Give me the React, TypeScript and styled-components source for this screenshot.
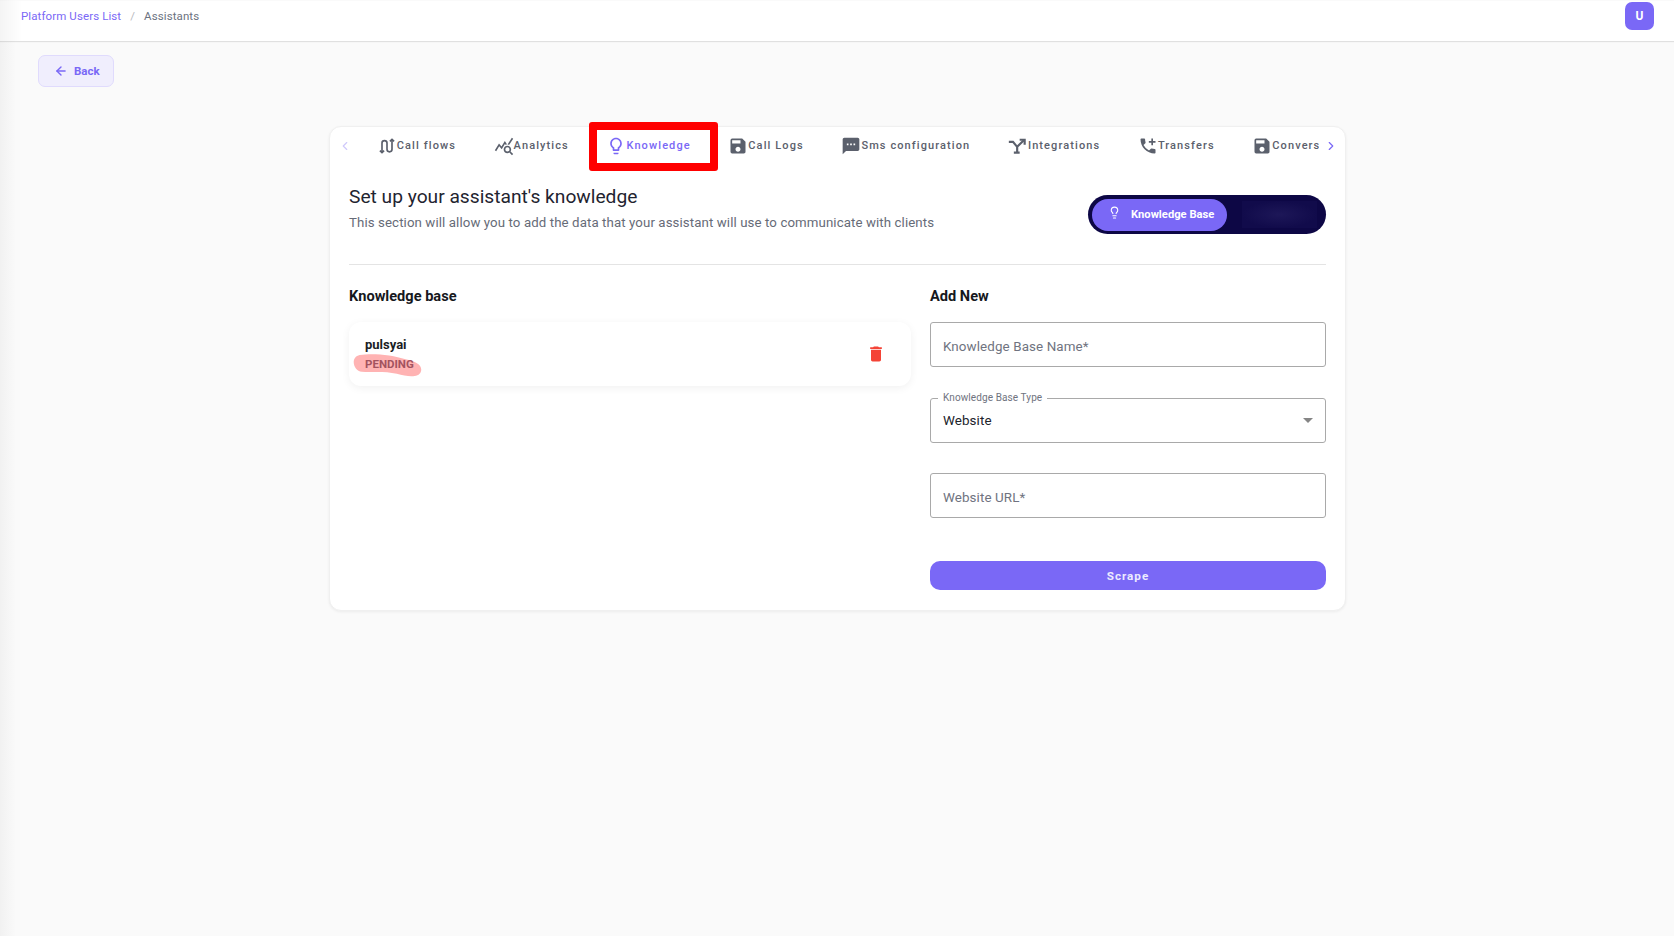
import React from 'react';
import styled, { createGlobalStyle } from 'styled-components';
import { ArrowLeft, ChevronLeft, ChevronRight, Lightbulb } from 'lucide-react';
import {
	MdAddIcCall,
	MdDelete,
	MdLightbulbOutline,
	MdOutlineQueryStats,
	MdSave,
	MdSms,
} from 'react-icons/md';

const GlobalStyle = createGlobalStyle`
	html, body {
		margin: 0;
		padding: 0;
		background: #fafafa;
		font-family: Roboto, "Liberation Sans", sans-serif;
	}
	* {
		box-sizing: border-box;
	}
`;

const Page = styled.div`
	position: relative;
	width: 1674px;
	height: 936px;
	overflow: hidden;
	background: linear-gradient(90deg, #f1f1f1 0, #fafafa 16px);
`;

const TopBar = styled.header`
	display: flex;
	align-items: flex-start;
	justify-content: space-between;
	height: 40px;
	margin-top: 1px;
	padding: 1px 20px 0 21px;
	background: linear-gradient(90deg, #f4f4f4 0, #ffffff 22px);
	box-shadow: 0 1px 1px rgba(0, 0, 0, 0.1);
`;

const Crumbs = styled.nav`
	display: flex;
	align-items: center;
	gap: 9px;
	height: 28px;
	font-size: 11.5px;
	letter-spacing: 0.1px;
`;

const CrumbLink = styled.span`
	color: #7a68f6;
`;

const CrumbSep = styled.span`
	color: #b9b9c0;
`;

const CrumbCurrent = styled.span`
	color: #6b7280;
`;

const Avatar = styled.div`
	display: flex;
	align-items: center;
	justify-content: center;
	width: 29px;
	height: 28px;
	border-radius: 7px;
	background: #7a68f6;
	color: #fff;
	font-size: 12px;
	font-weight: 700;
`;

const BackRow = styled.div`
	padding: 14px 0 0 38px;
`;

const BackButton = styled.button`
	display: flex;
	align-items: center;
	gap: 6px;
	width: 76px;
	height: 32px;
	padding: 0 0 0 15px;
	border: 1px solid #e0dbfd;
	border-radius: 7px;
	background: #f0eefd;
	color: #7a68f6;
	font-family: inherit;
	font-size: 11.5px;
	font-weight: 700;
`;

const Card = styled.main`
	width: 1017px;
	height: 485px;
	margin: 39px 0 0 329px;
	padding: 0 19px;
	border: 1px solid #f0f0f0;
	border-radius: 12px;
	background: #fff;
	box-shadow: 0 1px 3px rgba(0, 0, 0, 0.06);
`;

const TabBar = styled.div`
	display: flex;
	align-items: center;
	height: 37px;
	margin: 0 -19px;
	padding: 0 7px 0 8px;
`;

const ScrollArrow = styled.span<{ $dim?: boolean }>`
	display: flex;
	flex: none;
	width: 14px;
	color: ${({ $dim }) => ($dim ? '#cfc9fb' : '#7a68f6')};
`;

const TabScroller = styled.div`
	display: flex;
	flex: 1;
	align-items: center;
	min-width: 0;
	overflow: hidden;
	margin: 0 5px 0 6px;
`;

const Tab = styled.div<{ $active?: boolean }>`
	display: flex;
	flex: none;
	align-items: center;
	padding: 0 18.8px;
	color: ${({ $active }) => ($active ? '#7a68f6' : '#5b606c')};
	font-size: 11px;
	font-weight: 500;
	letter-spacing: 1.1px;
	white-space: nowrap;

	svg {
		flex: none;
		width: 20px;
		height: 20px;
	}
`;

const Highlight = styled.div`
	position: absolute;
	left: 589px;
	top: 122px;
	width: 129px;
	height: 49px;
	border: 8px solid #ff0000;
	border-radius: 3px;
	pointer-events: none;
`;

const Heading = styled.div`
	display: flex;
	align-items: flex-start;
	justify-content: space-between;
	height: 101px;
	padding-top: 21px;
	border-bottom: 1px solid #e4e4e4;
`;

const Title = styled.h1`
	margin: 0 0 5px;
	color: #1f2430;
	font-size: 19.2px;
	font-weight: 400;
	line-height: 24px;
`;

const Subtitle = styled.p`
	margin: 0;
	color: #666b77;
	font-size: 13.25px;
	line-height: 18px;
	letter-spacing: 0.1px;
`;

const ModeSwitch = styled.div`
	display: flex;
	align-items: center;
	gap: 15px;
	width: 238px;
	height: 39px;
	margin-top: 10px;
	padding: 3px 0 3px 4px;
	border-radius: 20px;
	background: #0d0745;
`;

const ModeActive = styled.div`
	display: flex;
	flex: none;
	align-items: center;
	gap: 10px;
	width: 135px;
	height: 32px;
	padding: 0 0 1px 16px;
	border-radius: 16px;
	background: #7a68f6;
	color: #fff;
	font-size: 11.2px;
	font-weight: 700;
	white-space: nowrap;
`;

const ModeIcon = styled(Lightbulb)`
	margin-top: -3px;
`;

const ModeHidden = styled.div`
	width: 75px;
	height: 27px;
	background: radial-gradient(ellipse at center, #1d1758 0, #110b4b 70%);
`;

const Columns = styled.div`
	display: grid;
	grid-template-columns: 562px 396px;
	gap: 19px;
`;

const SectionTitle = styled.h2`
	margin: 0;
	padding: 22px 0 17px;
	color: #16181d;
	font-size: 14.6px;
	font-weight: 700;
	line-height: 18px;
`;

const KnowledgeItem = styled.div`
	display: flex;
	align-items: center;
	justify-content: space-between;
	height: 64px;
	padding: 0 25px 0 16px;
	border-radius: 12px;
	background: #fff;
	box-shadow: 0 2px 8px rgba(0, 0, 0, 0.06);
`;

const ItemName = styled.div`
	color: #1a1d24;
	font-size: 13px;
	font-weight: 700;
	line-height: 16px;
`;

const StatusWrap = styled.div`
	position: relative;
	margin-top: 4px;
	color: #a3535f;
	font-size: 11.5px;
	font-weight: 700;
	line-height: 15px;
`;

const StatusBlob = styled.svg`
	position: absolute;
	left: -14px;
	top: -4px;
	width: 72px;
	height: 25px;
`;

const StatusText = styled.span`
	position: relative;
`;

const Form = styled.div`
	display: flex;
	flex-direction: column;
`;

const Field = styled.div<{ $gap: number }>`
	position: relative;
	display: flex;
	align-items: center;
	justify-content: space-between;
	height: 45px;
	margin-bottom: ${({ $gap }) => $gap}px;
	padding: 4px 12px 0 12px;
	border: 1px solid #a9a9a9;
	border-radius: 3px;
	font-size: 13.4px;
	letter-spacing: 0.1px;
`;

const Placeholder = styled.span`
	color: #6f7380;
`;

const Value = styled.span`
	margin-top: -4px;
	color: #20232b;
`;

const FloatLabel = styled.span`
	position: absolute;
	left: 7px;
	top: -7px;
	padding: 0 5px;
	background: #fff;
	color: #6f7380;
	font-size: 10px;
	line-height: 12px;
`;

const Caret = styled.span`
	width: 0;
	height: 0;
	margin-top: -4px;
	border-left: 5px solid transparent;
	border-right: 5px solid transparent;
	border-top: 5px solid #858585;
`;

const ScrapeButton = styled.button`
	width: 396px;
	height: 29px;
	border: 0;
	border-radius: 10px;
	background: #7a68f6;
	color: #ecebff;
	font-family: inherit;
	font-size: 11.7px;
	font-weight: 700;
	letter-spacing: 1px;
`;

const DeleteIcon = styled(MdDelete)`
	width: 20px;
	height: 20px;
	color: #f44336;
`;

function CallFlowIcon() {
	return (
		<svg viewBox="0 0 24 24" fill="none" stroke="currentColor" strokeWidth="2">
			<path d="M6 20V8.5a3 3 0 0 1 6 0v7.500a3 3 0 0 0 6 0V4" />
			<path d="M3.500 17.500L6 20l2.500-2.500M15.500 6.500L18 4l2.500 2.500" />
		</svg>
	);
}

function IntegrationIcon() {
	return (
		<svg viewBox="0 0 24 24" fill="none" stroke="currentColor" strokeWidth="2.6">
			<path d="M1 7h5l5 6v7M7 20h7M11 13l8-8" />
			<path d="M14 4.500h6v6" />
		</svg>
	);
}

const tabs = [
	{ label: 'Call flows', icon: <CallFlowIcon /> },
	{ label: 'Analytics', icon: <MdOutlineQueryStats /> },
	{ label: 'Knowledge', icon: <MdLightbulbOutline />, active: true },
	{ label: 'Call Logs', icon: <MdSave /> },
	{ label: 'Sms configuration', icon: <MdSms /> },
	{ label: 'Integrations', icon: <IntegrationIcon /> },
	{ label: 'Transfers', icon: <MdAddIcCall /> },
	{ label: 'Conversations', icon: <MdSave /> },
];

export default function App() {
	return (
		<Page>
			<GlobalStyle />
			<TopBar>
				<Crumbs>
					<CrumbLink>Platform Users List</CrumbLink>
					<CrumbSep>/</CrumbSep>
					<CrumbCurrent>Assistants</CrumbCurrent>
				</Crumbs>
				<Avatar>U</Avatar>
			</TopBar>
			<BackRow>
				<BackButton>
					<ArrowLeft size={14} strokeWidth={2.4} />
					Back
				</BackButton>
			</BackRow>
			<Card>
				<TabBar>
					<ScrollArrow $dim>
						<ChevronLeft size={14} strokeWidth={2} />
					</ScrollArrow>
					<TabScroller>
						{tabs.map((tab) => (
							<Tab key={tab.label} $active={tab.active}>
								{tab.icon}
								{tab.label}
							</Tab>
						))}
					</TabScroller>
					<ScrollArrow>
						<ChevronRight size={14} strokeWidth={2} />
					</ScrollArrow>
				</TabBar>
				<Heading>
					<div>
						<Title>Set up your assistant's knowledge</Title>
						<Subtitle>
							This section will allow you to add the data that your assistant will use to
							communicate with clients
						</Subtitle>
					</div>
					<ModeSwitch>
						<ModeActive>
							<ModeIcon size={13} />
							Knowledge Base
						</ModeActive>
						<ModeHidden />
					</ModeSwitch>
				</Heading>
				<Columns>
					<section>
						<SectionTitle>Knowledge base</SectionTitle>
						<KnowledgeItem>
							<div>
								<ItemName>pulsyai</ItemName>
								<StatusWrap>
									<StatusBlob viewBox="0 0 66 24" preserveAspectRatio="none">
										<path
											d="M8 2 C 20 0 38 2 50 6 C 60 8 66 12 64 18 C 62 24 52 23 42 20 C 30 17 18 19 10 18 C 2 17 -1 4 8 2 Z"
											fill="#ffb3b3"
										/>
									</StatusBlob>
									<StatusText>PENDING</StatusText>
								</StatusWrap>
							</div>
							<DeleteIcon />
						</KnowledgeItem>
					</section>
					<Form>
						<SectionTitle>Add New</SectionTitle>
						<Field $gap={31}>
							<Placeholder>Knowledge Base Name*</Placeholder>
						</Field>
						<Field $gap={30}>
							<FloatLabel>Knowledge Base Type</FloatLabel>
							<Value>Website</Value>
							<Caret />
						</Field>
						<Field $gap={43}>
							<Placeholder>Website URL*</Placeholder>
						</Field>
						<ScrapeButton>Scrape</ScrapeButton>
					</Form>
				</Columns>
			</Card>
			<Highlight />
		</Page>
	);
}
